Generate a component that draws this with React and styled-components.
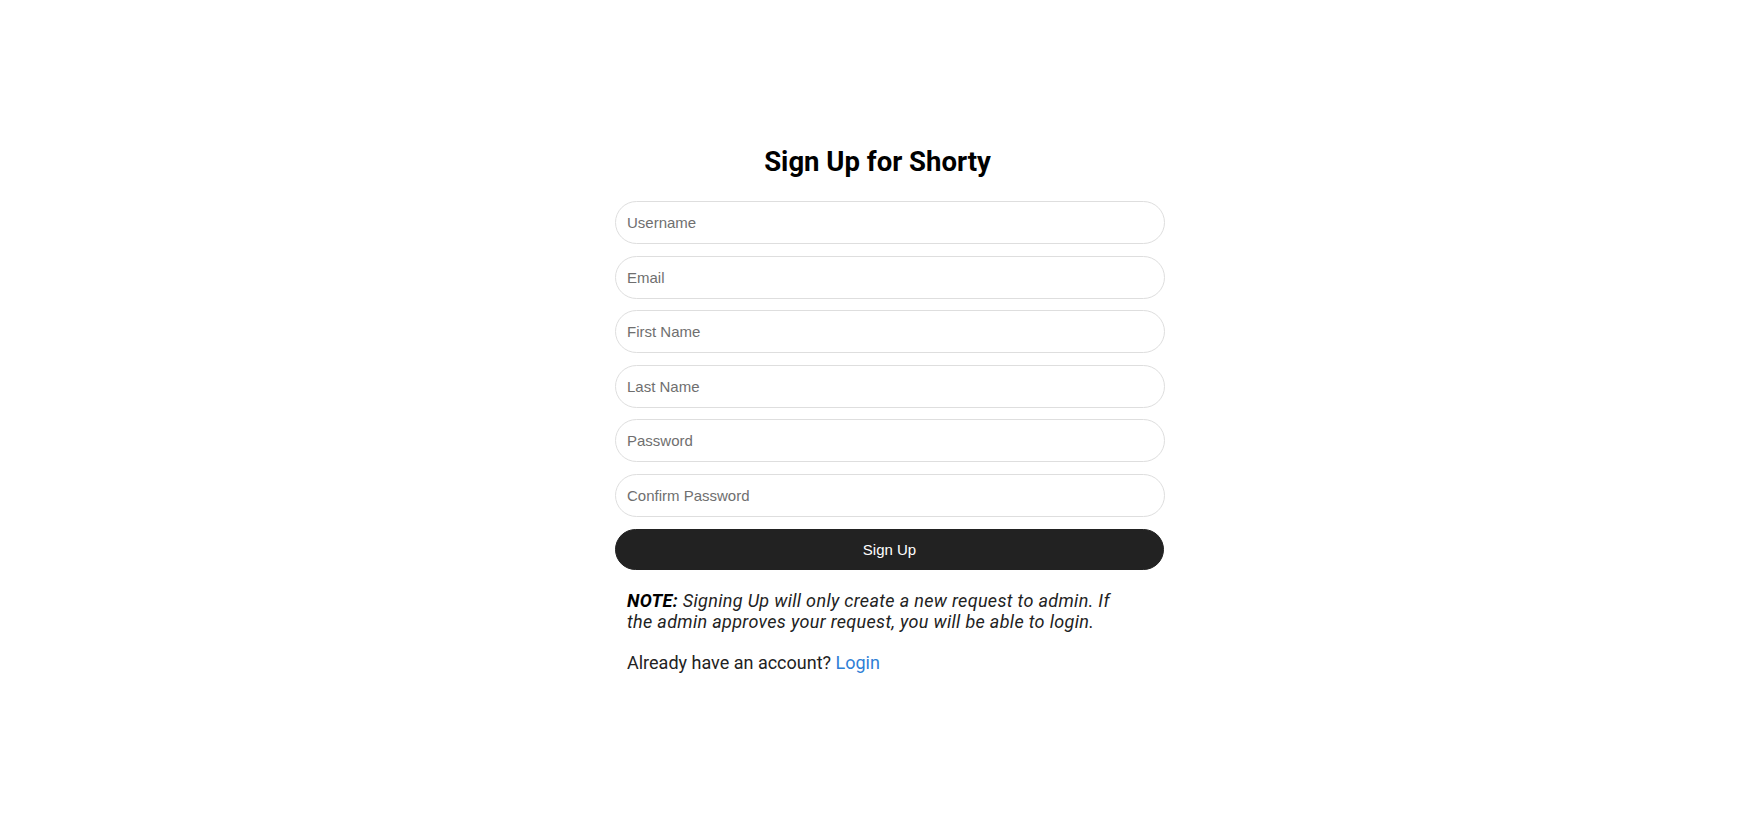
import React, { useState } from "react";
import styled, { createGlobalStyle } from "styled-components";

const GlobalStyle = createGlobalStyle`
  body {
    margin: 0;
    background: #fff;
    font-family: Roboto, "Liberation Sans", sans-serif;
  }
`;

const fields = [
  { name: "username", placeholder: "Username", type: "text" },
  { name: "email", placeholder: "Email", type: "email" },
  { name: "firstName", placeholder: "First Name", type: "text" },
  { name: "lastName", placeholder: "Last Name", type: "text" },
  { name: "password", placeholder: "Password", type: "password" },
  { name: "confirmPassword", placeholder: "Confirm Password", type: "password" },
];

const App = () => {
  const [form, setForm] = useState({});

  const handleChange = (e) => {
    setForm({ ...form, [e.target.name]: e.target.value });
  };

  return (
    <>
      <GlobalStyle />
      <Page>
        <Title>Sign Up for Shorty</Title>
        <Form onSubmit={(e) => e.preventDefault()}>
          {fields.map((f) => (
            <Input
              key={f.name}
              name={f.name}
              type={f.type}
              placeholder={f.placeholder}
              value={form[f.name] || ""}
              onChange={handleChange}
            />
          ))}
          <Button type="submit">Sign Up</Button>
        </Form>
        <Note>
          <b>NOTE:</b> Signing Up will only create a new request to admin. If
          the admin approves your request, you will be able to login.
        </Note>
        <Switch>
          Already have an account? <a href="#login">Login</a>
        </Switch>
      </Page>
    </>
  );
};

const Page = styled.div`
  width: 525px;
  margin: 0 auto;
  padding-top: 145px;
  display: flex;
  flex-direction: column;
`;

const Title = styled.h1`
  margin: 0 0 23px;
  font-family: Roboto, sans-serif;
  font-size: 27.5px;
  font-weight: 700;
  line-height: normal;
  color: #000;
  text-align: center;
`;

const Form = styled.form`
  display: flex;
  flex-direction: column;
  gap: 11.6px;
`;

const Input = styled.input`
  box-sizing: content-box;
  width: 100%;
  height: 41px;
  padding: 0 12px 0 11px;
  border: 1px solid #dedede;
  border-radius: 22px;
  font-family: "Liberation Sans", Arial, sans-serif;
  font-size: 15px;
  color: #222;
  background: #fff;
  outline: none;

  &::placeholder {
    color: #6f6f6f;
  }
`;

const Button = styled.button`
  box-sizing: content-box;
  width: 100%;
  height: 39px;
  padding: 0 11px;
  border: 1px solid #222;
  border-radius: 21px;
  background: #222;
  color: #fff;
  font-family: "Liberation Sans", Arial, sans-serif;
  font-size: 15px;
  cursor: pointer;
`;

const Note = styled.p`
  margin: 20px 0 0;
  padding: 0 12px;
  width: 500px;
  font-family: Roboto, sans-serif;
  font-size: 18px;
  font-style: italic;
  letter-spacing: 0.33px;
  line-height: normal;
  color: #222;

  b {
    font-weight: 700;
    color: #000;
  }
`;

const Switch = styled.p`
  margin: 20px 0 0;
  padding: 0 12px;
  font-family: Roboto, sans-serif;
  font-size: 18px;
  line-height: normal;
  color: #222;

  a {
    color: #2f7fd6;
    text-decoration: none;
  }
`;

export default App;
